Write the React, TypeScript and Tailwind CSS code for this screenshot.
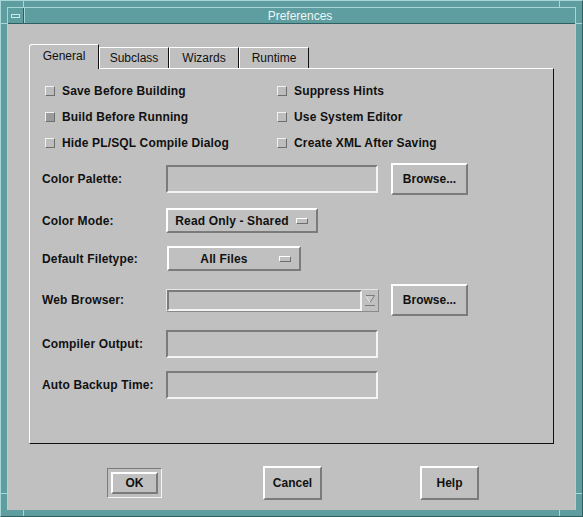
import React from 'react'

const raised = 'border-2 border-t-white border-l-white border-r-[#7b7b7b] border-b-[#7b7b7b]'
const sunken = 'border-2 border-t-[#7b7b7b] border-l-[#7b7b7b] border-r-[#f4f4f4] border-b-[#f4f4f4]'

function Check({ label, dark }: { label: string; dark?: boolean }) {
  return (
    <div className="flex items-center gap-[7px] h-[26px]">
      <span
        className={
          'w-[10px] h-[10px] border border-t-[#f2f2f2] border-l-[#f2f2f2] border-r-[#6e6e6e] border-b-[#6e6e6e] ' +
          (dark ? 'bg-[#9c9c9c]' : 'bg-[#bdbdbd]')
        }
      />
      <span className="text-[12px] font-bold text-[#111] tracking-[0.15px]">{label}</span>
    </div>
  )
}

function Indicator() {
  return <span className="w-[12px] h-[6px] border border-t-white border-l-white border-r-[#6e6e6e] border-b-[#6e6e6e] bg-[#c0c0c0]" />
}

function Label({ children }: { children: React.ReactNode }) {
  return <span className="w-[124px] shrink-0 text-[12px] font-bold text-[#111] tracking-[0.15px]">{children}</span>
}

function Browse({ gap = 'ml-[13px]' }: { gap?: string }) {
  return (
    <button className={`${raised} ${gap} w-[77px] h-[32px] bg-[#c0c0c0] text-[12px] font-bold text-[#111]`}>Browse...</button>
  )
}

export default function App() {
  const tabs = ['General', 'Subclass', 'Wizards', 'Runtime']
  return (
    <div className="relative w-[583px] h-[517px] bg-[#5f9ea0] border border-t-[#a6d6d6] border-l-[#a6d6d6] border-r-[#2f5f5f] border-b-[#2f5f5f] p-[6px] font-['Liberation_Sans',Arial,sans-serif] select-none">
      {/* frame corner marks */}
      <span className="absolute top-0 left-[22px] w-px h-[6px] bg-[#a6d6d6]" />
      <span className="absolute top-0 left-[558px] w-px h-[6px] bg-[#a6d6d6]" />
      <span className="absolute top-[22px] left-0 w-[6px] h-px bg-[#a6d6d6]" />
      <span className="absolute top-[22px] right-0 w-[6px] h-px bg-[#a6d6d6]" />
      <span className="absolute bottom-0 left-[22px] w-px h-[6px] bg-[#a6d6d6]" />
      <span className="absolute bottom-0 left-[558px] w-px h-[6px] bg-[#a6d6d6]" />
      <span className="absolute top-[492px] left-0 w-[6px] h-px bg-[#a6d6d6]" />
      <span className="absolute top-[492px] right-0 w-[6px] h-px bg-[#a6d6d6]" />

      <div className="flex flex-col h-full border-t border-l border-t-[#a6d6d6] border-l-[#a6d6d6] border-r border-r-[#a6d6d6]">
        {/* title bar */}
        <div className="flex h-[16px] border-b border-b-[#2f5f5f] shrink-0">
          <div className="w-[16px] border-r border-r-[#2f5f5f] flex items-center justify-center">
            <span className="w-[9px] h-[4px] border border-[#c8eaea]" />
          </div>
          <div className="flex-1 flex items-center justify-center text-[12px] text-[#eef6f6] leading-none border-l border-l-[#a6d6d6]">
            Preferences
          </div>
        </div>

        {/* body */}
        <div className="flex-1 bg-[#c0c0c0] pt-[20px] pl-[21px] pr-[21px] flex flex-col">
          <div className="flex items-end h-[24px]">
            {tabs.map((t, i) => (
              <div
                key={t}
                className={
                  'flex items-center justify-center w-[70px] border-t border-l border-t-white border-l-white border-r border-r-[#111] bg-[#c0c0c0] text-[12px] text-[#111] ' +
                  (i === 0 ? 'h-[25px] -mb-px relative z-10 rounded-tl-[3px] pb-[2px]' : 'h-[21px] w-[69px]')
                }
              >
                {t}
              </div>
            ))}
          </div>

          <div className="h-[376px] border border-t-white border-l-white border-r-[#111] border-b-[#111] flex flex-col">
            <div className="grid grid-cols-[232px_1fr] pl-[15px] pt-[9px]">
              <Check label="Save Before Building" />
              <Check label="Suppress Hints" />
              <Check label="Build Before Running" dark />
              <Check label="Use System Editor" />
              <Check label="Hide PL/SQL Compile Dialog" />
              <Check label="Create XML After Saving" />
            </div>

            <div className="flex flex-col pl-[12px]">
              <div className="flex items-center h-[32px] mt-[7px]">
                <Label>Color Palette:</Label>
                <div className={`${sunken} w-[212px] h-[28px]`} />
                <Browse />
              </div>

              <div className="flex items-center h-[25px] mt-[13px]">
                <Label>Color Mode:</Label>
                <div className={`${raised} w-[152px] h-[25px] flex items-center pr-[8px]`}>
                  <span className="flex-1 text-center text-[12px] font-bold text-[#111] tracking-[0.15px]">Read Only - Shared</span>
                  <Indicator />
                </div>
              </div>

              <div className="flex items-center h-[25px] mt-[13px]">
                <Label>Default Filetype:</Label>
                <div className={`${raised} ml-px w-[134px] h-[25px] flex items-center pr-[8px]`}>
                  <span className="flex-1 text-center text-[12px] font-bold text-[#111] tracking-[0.15px]">All Files</span>
                  <Indicator />
                </div>
              </div>

              <div className="flex items-center h-[32px] mt-[13px]">
                <Label>Web Browser:</Label>
                <div className="w-[213px] h-[23px] border border-t-[#e6e6e6] border-l-[#e6e6e6] border-r-[#8a8a8a] border-b-[#8a8a8a] flex">
                  <div className={`${sunken} flex-1`} />
                  <div className="w-[16px] flex items-start justify-center pt-[2px]">
                    <svg width="12" height="16" viewBox="0 0 12 16">
                      <path d="M1.5 3.5 L10.5 3.5 L6 10.5 Z" fill="#c8c8c8" stroke="#7b7b7b" strokeWidth="1" />
                      <path d="M1.5 3.5 L6 10.5" stroke="#fafafa" strokeWidth="1" />
                      <line x1="1" y1="13.5" x2="11" y2="13.5" stroke="#7b7b7b" strokeWidth="1" />
                    </svg>
                  </div>
                </div>
                <Browse gap="ml-[12px]" />
              </div>

              <div className="flex items-center h-[28px] mt-[14px]">
                <Label>Compiler Output:</Label>
                <div className={`${sunken} w-[212px] h-[28px]`} />
              </div>

              <div className="flex items-center h-[28px] mt-[13px]">
                <Label>Auto Backup Time:</Label>
                <div className={`${sunken} w-[212px] h-[28px]`} />
              </div>
            </div>
          </div>

          <div className="flex items-center h-[34px] mt-[22px] -ml-[21px] pl-[99px]">
            <div className="w-[55px] h-[30px] border border-t-[#7b7b7b] border-l-[#7b7b7b] border-r-[#f4f4f4] border-b-[#f4f4f4] flex items-center justify-center">
              <button className={`${raised} w-[47px] h-[22px] bg-[#c0c0c0] text-[12px] font-bold text-[#111]`}>OK</button>
            </div>
            <button className={`${raised} ml-[101px] w-[59px] h-[34px] bg-[#c0c0c0] text-[12px] font-bold text-[#111]`}>Cancel</button>
            <button className={`${raised} ml-[98px] w-[59px] h-[34px] bg-[#c0c0c0] text-[12px] font-bold text-[#111]`}>Help</button>
          </div>
        </div>
      </div>
    </div>
  )
}
